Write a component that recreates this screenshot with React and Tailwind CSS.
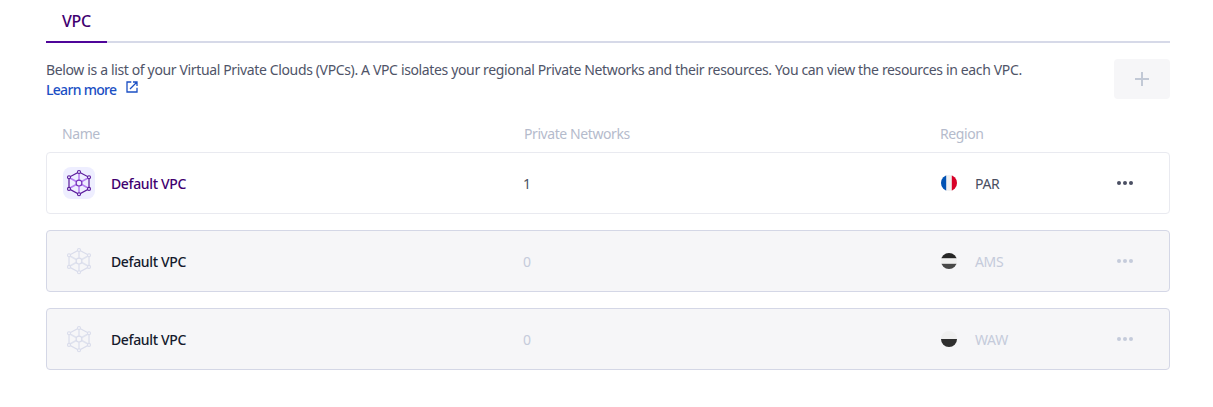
const spokes = ['M12 12V1', 'M12 12V23', 'M12 12L2 6.5', 'M12 12L22 6.5', 'M12 12L2 17.5', 'M12 12L22 17.5'];
const nodes = [[12, 1], [22, 6.3], [22, 17.9], [12, 23.2], [2, 17.9], [2, 6.3]];

function NetworkIcon({ disabled }) {
  const line = disabled ? '#d9dceb' : '#5a1a9c';
  const spoke = disabled ? '#dfe2ee' : '#b57df2';
  const fill = disabled ? '#f6f6f8' : '#eeeeff';
  return (
    <svg width="32" height="32" viewBox="-4 -4 32 32" fill="none" className="shrink-0">
      {!disabled && <rect x="-4" y="-4" width="32" height="32" rx="8" fill="#eeeeff" />}
      <path d={spokes.join('')} stroke={spoke} strokeWidth="1.5" />
      <path d="M12 1L22 6.3V17.9L12 23.2L2 17.9V6.3Z" stroke={line} strokeWidth="1.2" />
      {nodes.map(([x, y]) => (
        <circle key={`${x}-${y}`} cx={x} cy={y} r="1.5" fill={fill} stroke={line} strokeWidth="1.1" />
      ))}
      <circle cx="12" cy="12.1" r="2.9" fill={fill} stroke={disabled ? line : '#7430b8'} strokeWidth="1.2" />
    </svg>
  );
}

function Flag({ region }) {
  return (
    <svg width="16" height="16" viewBox="0 0 16 16" className="shrink-0">
      <clipPath id={`flag-${region}`}>
        <circle cx="8" cy="8" r="8" />
      </clipPath>
      <g clipPath={`url(#flag-${region})`}>
        <rect width="16" height="16" fill="#f0f0f0" />
        {region === 'PAR' && (
          <>
            <rect width="5.2" height="16" fill="#0052b4" />
            <rect x="10.8" width="5.2" height="16" fill="#d80027" />
          </>
        )}
        {region === 'AMS' && (
          <>
            <rect width="16" height="5.2" fill="#262626" />
            <rect y="10.8" width="16" height="5.2" fill="#484848" />
          </>
        )}
        {region === 'WAW' && <rect y="8" width="16" height="8" fill="#2f2f2f" />}
      </g>
    </svg>
  );
}

function Row({ region, count, disabled }) {
  return (
    <div
      className={`flex h-[62px] items-center rounded-[4px] border pl-4 ${
        disabled ? 'border-[#d4d7e6] bg-[#f6f6f8] text-[#c5cbdb]' : 'border-[#e9eaf0] bg-white text-[#4a4f62]'
      }`}
    >
      <div className="flex w-[460px] items-center gap-4">
        <NetworkIcon disabled={disabled} />
        <span className={`pt-0.5 font-medium ${disabled ? 'text-[#151a2d]' : 'text-[#3f0070]'}`}>Default VPC</span>
      </div>
      <div className="w-[418px] pt-0.5">{count}</div>
      <div className="flex w-[176px] items-center gap-[18px]">
        <Flag region={region} />
        <span className="pt-0.5">{region}</span>
      </div>
      <svg width="16" height="4" viewBox="0 0 16 4" fill="currentColor">
        <circle cx="2" cy="2" r="2" />
        <circle cx="8" cy="2" r="2" />
        <circle cx="14" cy="2" r="2" />
      </svg>
    </div>
  );
}

export default function App() {
  return (
    <main className="h-[407px] overflow-hidden bg-white pr-[43px] pl-[46px] font-['Noto_Sans',sans-serif] text-[14px] leading-5 tracking-[-0.36px]">
      <nav className="flex h-[43px] border-b-2 border-[#d6d9e8]">
        <div className="-mb-[2px] w-[61px] border-b-2 border-[#4f0599] pt-[9px] pl-4 text-[16px] leading-6 font-medium text-[#3f0070]">
          VPC
        </div>
      </nav>
      <section className="flex h-[80px] items-start justify-between pt-4">
        <p className="pt-px whitespace-nowrap text-[#4f5468]">
          Below is a list of your Virtual Private Clouds (VPCs). A VPC isolates your regional Private Networks and their resources. You can view the resources in each VPC.
          <a className="flex items-center gap-[9px] font-medium tracking-[-0.7px] text-[#1b4fc4]">
            Learn more
            <svg width="14" height="14" viewBox="0 0 14 14" fill="none" stroke="currentColor" strokeWidth="1.3" className="-mt-1.5">
              <path d="M6.3 2H2V12H12V7.7M8 2H12V6M12 2L5 9" />
            </svg>
          </a>
        </p>
        <button className="flex h-10 w-14 shrink-0 items-center justify-center rounded-[4px] bg-[#f6f6f8] text-[#c2c9d6]">
          <svg width="14" height="14" viewBox="0 0 14 14" fill="currentColor">
            <path d="M6 0H8V6H14V8H8V14H6V8H0V6H6Z" />
          </svg>
        </button>
      </section>
      <div className="flex h-[29px] pt-px pl-4 tracking-[-0.42px] text-[#b5bbcc]">
        <div className="w-[462px]">Name</div>
        <div className="w-[416px]">Private Networks</div>
        <div>Region</div>
      </div>
      <div className="flex flex-col gap-4">
        <Row region="PAR" count={1} />
        <Row region="AMS" count={0} disabled />
        <Row region="WAW" count={0} disabled />
      </div>
    </main>
  );
}
